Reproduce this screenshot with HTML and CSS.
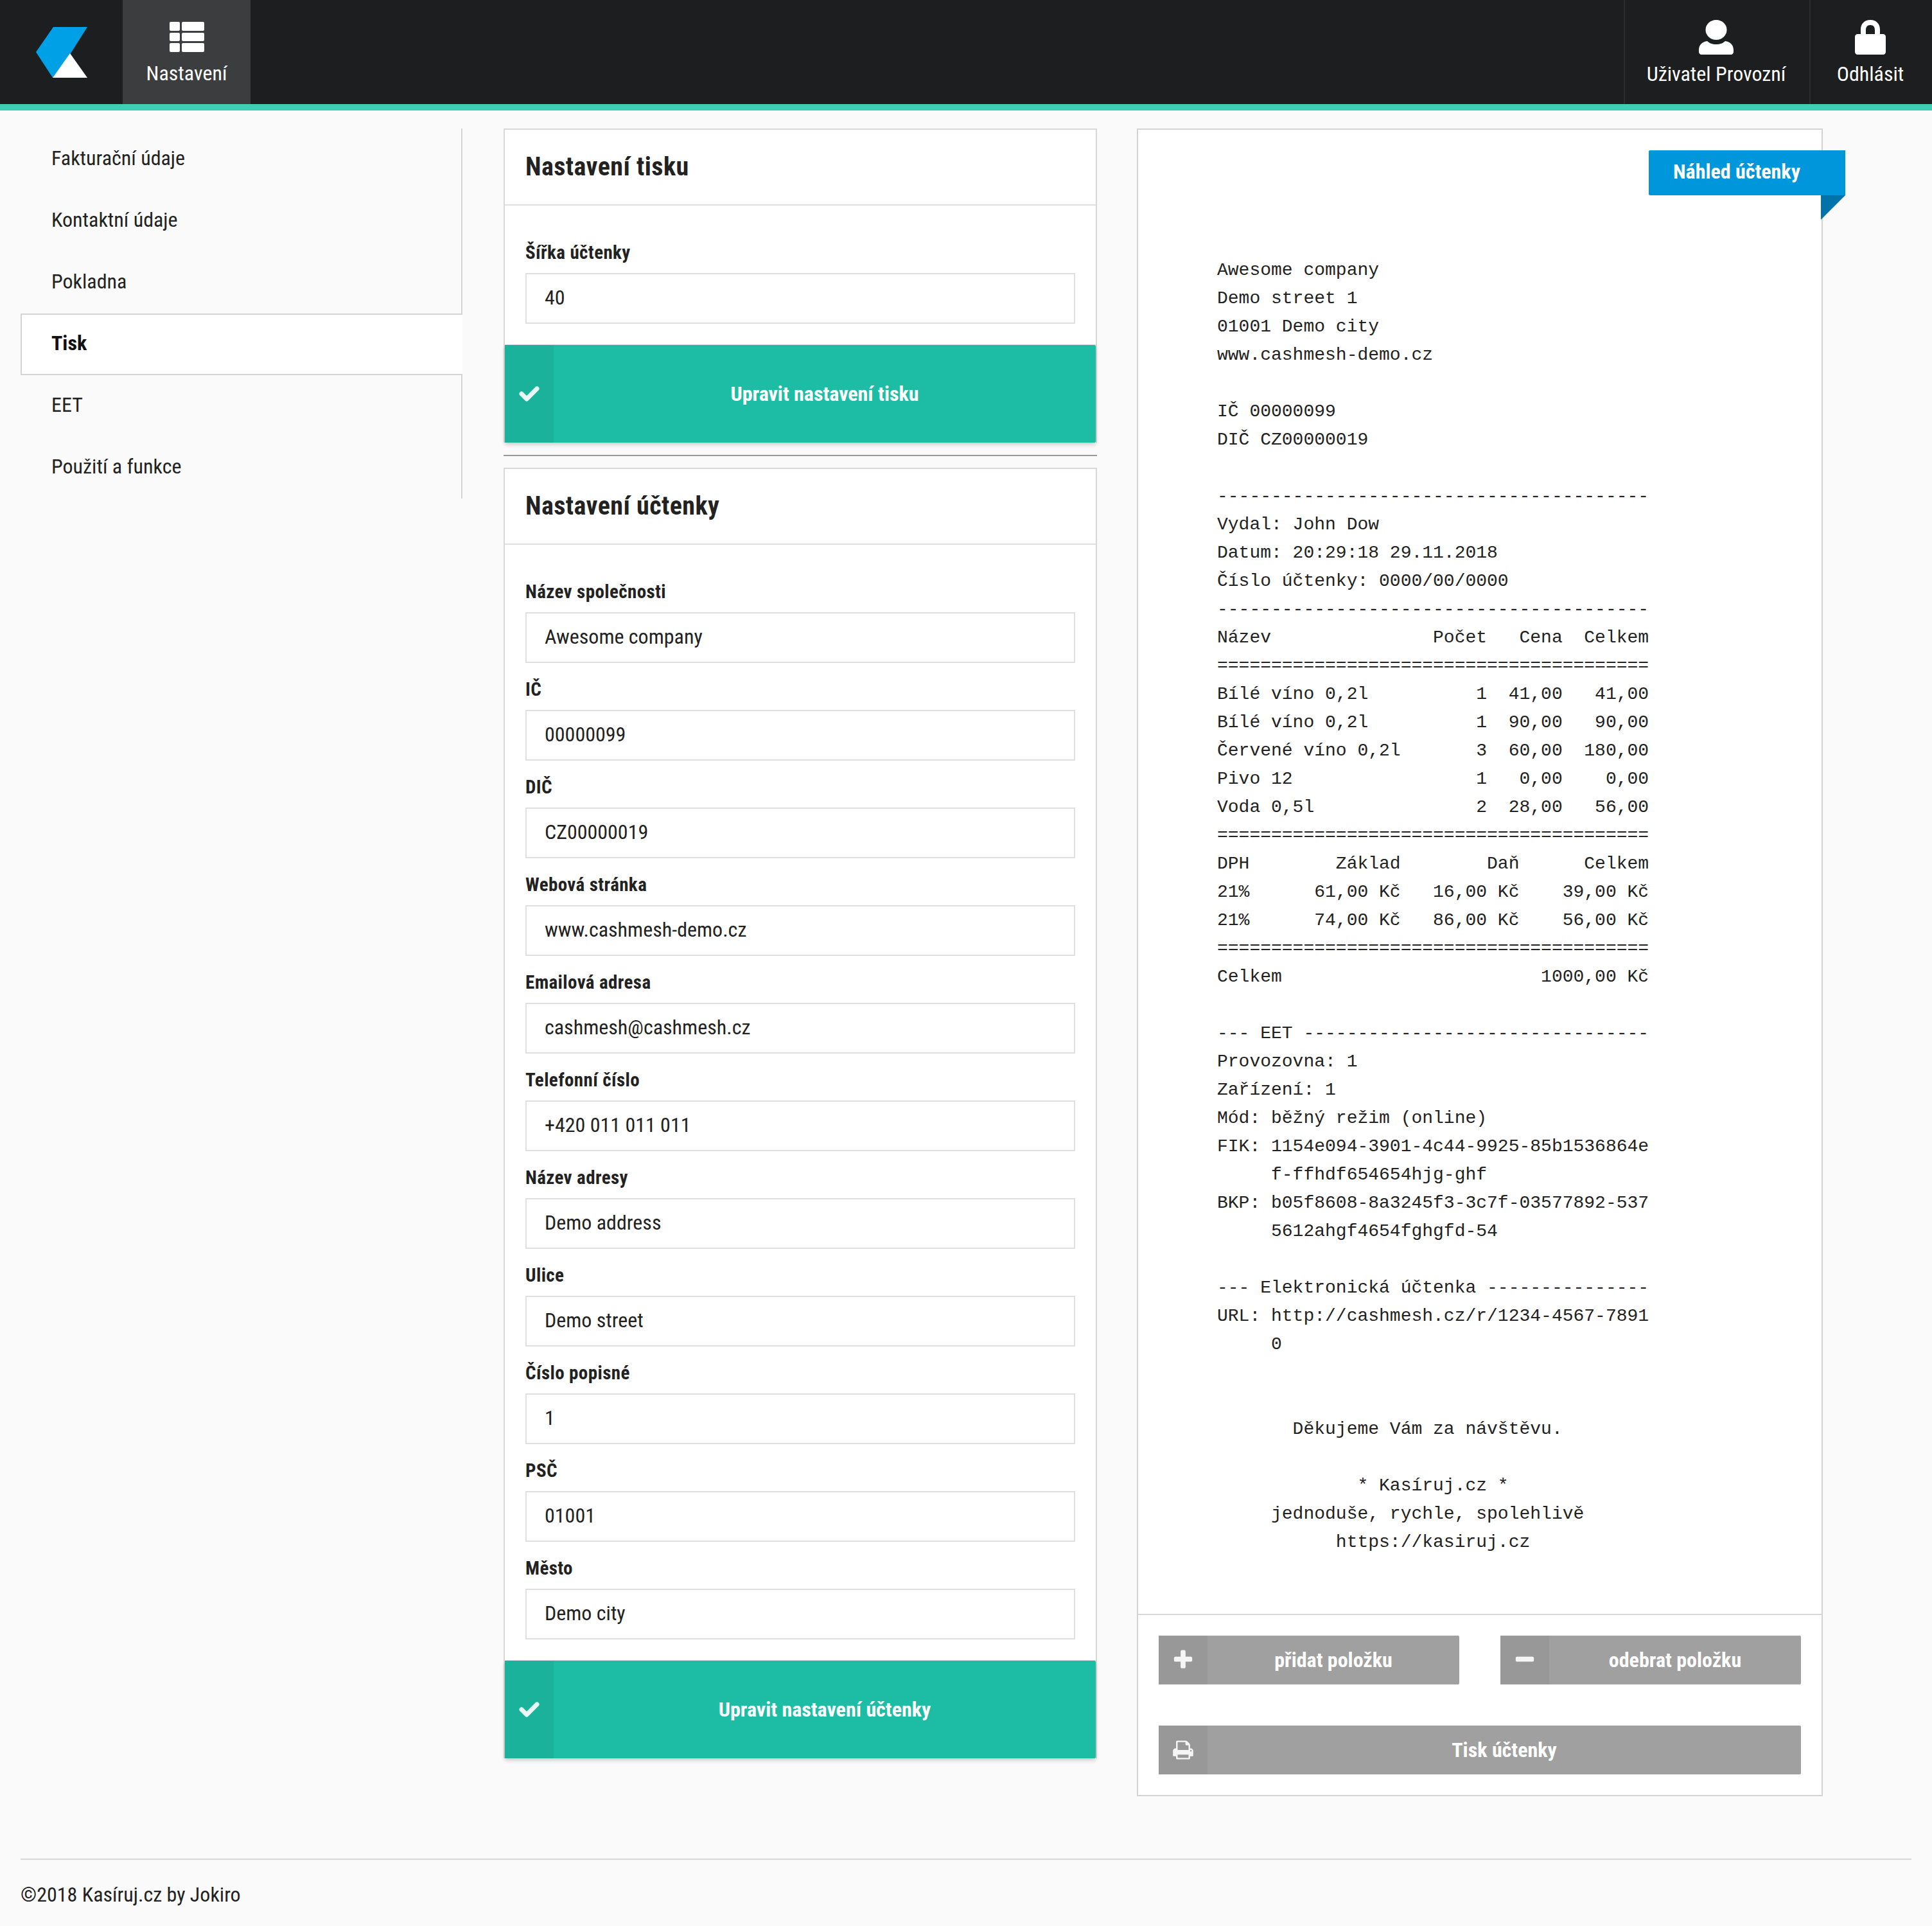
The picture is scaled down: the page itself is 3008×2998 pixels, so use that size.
FILE: index.html
```html
<!DOCTYPE html>
<html lang="cs">
<head>
<meta charset="utf-8">
<title>Kasíruj.cz – Nastavení tisku</title>
<link rel="stylesheet" href="styles.css">
</head>
<body>
<header class="topbar">
  <a class="logo" href="#">
    <svg viewBox="0 0 80 79" width="80" height="79"><polygon points="27,0 80,0 54,41 26,79 0,39" fill="#00a0e6"/><polygon points="53,41 80,79 26,79" fill="#fff"/></svg>
  </a>
  <a class="nav-item nav-active" href="#">
    <svg class="nav-icon" viewBox="0 0 54 47" width="54" height="47" fill="#fff"><rect x="0" y="0" width="16" height="14" rx="2"/><rect x="19" y="0" width="35" height="14" rx="2"/><rect x="0" y="17" width="16" height="13" rx="2"/><rect x="19" y="17" width="35" height="13" rx="2"/><rect x="0" y="33" width="16" height="14" rx="2"/><rect x="19" y="33" width="35" height="14" rx="2"/></svg>
    <span>Nastavení</span>
  </a>
  <div class="spacer"></div>
  <a class="nav-item nav-right user" href="#">
    <svg class="nav-icon" viewBox="0 0 54 54" width="54" height="54" fill="#fff"><ellipse cx="27" cy="15.500" rx="16.500" ry="15.500"/><path d="M0 47c0-8 5-13 13-14 3 3 8 5 14 5s11-2 14-5c8 1 13 6 13 14v3c0 2-2 4-4 4H4c-2 0-4-2-4-4z"/></svg>
    <span>Uživatel Provozní</span>
  </a>
  <a class="nav-item nav-right logout" href="#">
    <svg class="nav-icon" viewBox="0 0 48 54" width="48" height="54" fill="#fff"><path d="M24 0c-9 0-15 6-15 15v7H4c-2 0-4 2-4 4v24c0 2 2 4 4 4h40c2 0 4-2 4-4V26c0-2-2-4-4-4h-5v-7C39 6 33 0 24 0zm0 8c5 0 7 3 7 8v6H17v-6c0-5 2-8 7-8z"/></svg>
    <span>Odhlásit</span>
  </a>
</header>

<main class="content">
  <nav class="sidenav">
    <a href="#">Fakturační údaje</a>
    <a href="#">Kontaktní údaje</a>
    <a href="#">Pokladna</a>
    <a href="#" class="current">Tisk</a>
    <a href="#">EET</a>
    <a href="#">Použití a funkce</a>
  </nav>

  <div class="forms">
    <section class="card">
      <h2 class="card-title">Nastavení tisku</h2>
      <div class="card-body">
        <label class="field"><span>Šířka účtenky</span><input type="text" value="40"></label>
      </div>
      <button class="btn btn-teal"><span class="btn-icon"><svg viewBox="0 0 32 24" width="32" height="24" fill="none" stroke="#e8f8f5" stroke-width="7" stroke-linejoin="round" stroke-linecap="round"><polyline points="4,12 12,20 28,4"/></svg></span><span class="btn-text">Upravit nastavení tisku</span></button>
    </section>
    <hr class="rule">
    <section class="card">
      <h2 class="card-title">Nastavení účtenky</h2>
      <div class="card-body">
        <label class="field"><span>Název společnosti</span><input type="text" value="Awesome company"></label>
        <label class="field"><span>IČ</span><input type="text" value="00000099"></label>
        <label class="field"><span>DIČ</span><input type="text" value="CZ00000019"></label>
        <label class="field"><span>Webová stránka</span><input type="text" value="www.cashmesh-demo.cz"></label>
        <label class="field"><span>Emailová adresa</span><input type="text" value="cashmesh@cashmesh.cz"></label>
        <label class="field"><span>Telefonní číslo</span><input type="text" value="+420 011 011 011"></label>
        <label class="field"><span>Název adresy</span><input type="text" value="Demo address"></label>
        <label class="field"><span>Ulice</span><input type="text" value="Demo street"></label>
        <label class="field"><span>Číslo popisné</span><input type="text" value="1"></label>
        <label class="field"><span>PSČ</span><input type="text" value="01001"></label>
        <label class="field"><span>Město</span><input type="text" value="Demo city"></label>
      </div>
      <button class="btn btn-teal"><span class="btn-icon"><svg viewBox="0 0 32 24" width="32" height="24" fill="none" stroke="#e8f8f5" stroke-width="7" stroke-linejoin="round" stroke-linecap="round"><polyline points="4,12 12,20 28,4"/></svg></span><span class="btn-text">Upravit nastavení účtenky</span></button>
    </section>
  </div>

  <section class="preview">
    <div class="ribbon">Náhled účtenky</div>
    <pre class="receipt">Awesome company
Demo street 1
01001 Demo city
www.cashmesh-demo.cz

IČ 00000099
DIČ CZ00000019

----------------------------------------
Vydal: John Dow
Datum: 20:29:18 29.11.2018
Číslo účtenky: 0000/00/0000
----------------------------------------
Název               Počet   Cena  Celkem
========================================
Bílé víno 0,2l          1  41,00   41,00
Bílé víno 0,2l          1  90,00   90,00
Červené víno 0,2l       3  60,00  180,00
Pivo 12                 1   0,00    0,00
Voda 0,5l               2  28,00   56,00
========================================
DPH        Základ        Daň      Celkem
21%      61,00 Kč   16,00 Kč    39,00 Kč
21%      74,00 Kč   86,00 Kč    56,00 Kč
========================================
Celkem                        1000,00 Kč

--- EET --------------------------------
Provozovna: 1
Zařízení: 1
Mód: běžný režim (online)
FIK: 1154e094-3901-4c44-9925-85b1536864e
     f-ffhdf654654hjg-ghf
BKP: b05f8608-8a3245f3-3c7f-03577892-537
     5612ahgf4654fghgfd-54

--- Elektronická účtenka ---------------
URL: http://cashmesh.cz/r/1234-4567-7891
     0


       Děkujeme Vám za návštěvu.

             * Kasíruj.cz *
     jednoduše, rychle, spolehlivě
           https://kasiruj.cz</pre>
    <div class="actions">
      <div class="actions-row">
        <button class="btn btn-grey"><span class="btn-icon"><svg viewBox="0 0 1792 1792" width="36" height="36" fill="#f5f5f5"><path d="M1600 736v192q0 40-28 68t-68 28h-416v416q0 40-28 68t-68 28h-192q-40 0-68-28t-28-68v-416h-416q-40 0-68-28t-28-68v-192q0-40 28-68t68-28h416v-416q0-40 28-68t68-28h192q40 0 68 28t28 68v416h416q40 0 68 28t28 68z"/></svg></span><span class="btn-text">přidat položku</span></button>
        <button class="btn btn-grey"><span class="btn-icon"><svg viewBox="0 0 1792 1792" width="36" height="36" fill="#f5f5f5"><path d="M1600 736v192q0 40-28 68t-68 28h-1216q-40 0-68-28t-28-68v-192q0-40 28-68t68-28h1216q40 0 68 28t28 68z"/></svg></span><span class="btn-text">odebrat položku</span></button>
      </div>
      <button class="btn btn-grey"><span class="btn-icon"><svg viewBox="0 0 1792 1792" width="34" height="34" fill="#f5f5f5"><path d="M448 1536h896v-256h-896v256zm0-640h896v-384h-160q-40 0-68-28t-28-68v-160h-640v640zm1152 64q0-26-19-45t-45-19-45 19-19 45 19 45 45 19 45-19 19-45zm128 0v416q0 13-9.500 22.500t-22.500 9.500h-224v160q0 40-28 68t-68 28h-960q-40 0-68-28t-28-68v-160h-224q-13 0-22.500-9.500t-9.500-22.500v-416q0-79 56.500-135.500t135.500-56.500h64v-544q0-40 28-68t68-28h672q40 0 88 20t76 48l152 152q28 28 48 76t20 88v256h64q79 0 135.500 56.500t56.500 135.500z"/></svg></span><span class="btn-text">Tisk účtenky</span></button>
    </div>
  </section>
</main>

<footer class="footer">©2018 Kasíruj.cz by Jokiro</footer>
</body>
</html>
```
FILE: styles.css
```css
* { box-sizing: border-box; }
html, body { margin: 0; padding: 0; }
body {
  background: #fafafa;
  color: #222;
  font-family: Roboto, "Liberation Sans", sans-serif;
  font-size: 32px;
  font-stretch: 87%;
}
a { color: inherit; text-decoration: none; }

.topbar {
  display: flex;
  height: 172px;
  background: #1c1e20;
  border-bottom: 10px solid #41ceb4;
  color: #fff;
}
.logo { display: flex; align-items: center; padding: 0 55px 0 56px; width: 191px; }
.spacer { flex: 1; }
.nav-item {
  display: flex;
  flex-direction: column;
  align-items: center;
  padding-top: 31px;
  line-height: 40px;
  font-size: 32px;
}
.nav-item span { margin-top: 10px; }
.nav-active { width: 199px; background: #3c3d3f; padding-top: 34px; }
.nav-active span { margin-top: 13px; }
.nav-right { border-left: 2px solid #2a2c2e; padding-right: 3px; }
.user { width: 289px; }
.logout { width: 191px; }
.nav-icon { flex: none; }

.content {
  display: flex;
  align-items: flex-start;
  padding: 28px 0 0 32px;
}
.sidenav { width: 688px; margin-right: 64px; display: flex; flex-direction: column; }
.sidenav a {
  display: block;
  height: 96px;
  line-height: 93px;
  padding-left: 48px;
  border-right: 2px solid #d4d4d4;
}
.sidenav a.current {
  background: #fff;
  border: 2px solid #d4d4d4;
  border-right: 0;
  line-height: 89px;
  padding-left: 46px;
  font-weight: 700;
  color: #111;
}

.forms { width: 924px; margin-right: 62px; }
.card {
  background: #fff;
  border: 2px solid #d8d8d8;
  border-bottom: 0;
  display: flex;
  flex-direction: column;
}
.card-title {
  margin: 0;
  height: 118px;
  padding: 0 32px;
  line-height: 116px;
  font-size: 40px;
  letter-spacing: .45px;
  font-weight: 700;
  border-bottom: 2px solid #e0e0e0;
}
.card-body {
  display: flex;
  flex-direction: column;
  gap: 24px;
  padding: 56px 32px 32px;
  border-bottom: 1px solid #e0e0e0;
}
.field { display: block; }
.field span {
  display: block;
  height: 35px;
  margin-bottom: 14px;
  line-height: 35px;
  font-size: 29px;
  letter-spacing: .4px;
  font-weight: 700;
}
.field input {
  display: block;
  width: 100%;
  height: 79px;
  margin: 0;
  padding: 0 28px 4px;
  border: 2px solid #e0e0e0;
  background: #fff;
  color: #222;
  font: inherit;
  font-size: 32px;
  font-stretch: 87%;
  outline: 0;
}

.btn {
  display: flex;
  align-items: stretch;
  width: 100%;
  padding: 0;
  border: 0;
  border-radius: 2px;
  color: #fff;
  font-family: inherit;
  font-stretch: 87%;
  font-weight: 700;
  font-size: 32px;
}
.btn-icon { flex: none; width: 76px; display: flex; align-items: center; justify-content: center; }
.btn-text { flex: 1; display: flex; align-items: center; justify-content: center; }
.btn-teal { height: 152px; background: #1dbca5; box-shadow: 0 3px 6px rgba(0,0,0,.2); }
.btn-teal .btn-icon { background: #1bb29c; }
.btn-grey { height: 76px; background: #a0a0a0; }
.btn-grey .btn-icon { background: #989898; }
.rule { height: 2px; margin: 19px 0 18px; border: 0; background: #999; }

.preview {
  position: relative;
  width: 1068px;
  background: #fff;
  border: 2px solid #d4d4d4;
}
.ribbon {
  position: absolute;
  top: 32px;
  right: -37px;
  width: 306px;
  height: 70px;
  padding-left: 38px;
  line-height: 66px;
  background: #0096dc;
  color: #fff;
  font-weight: 700;
  font-size: 32px;
  border-radius: 2px 0 0 2px;
}
.ribbon::after {
  content: "";
  position: absolute;
  right: 0;
  top: 70px;
  width: 38px;
  height: 38px;
  background: #0074aa;
  clip-path: polygon(0 0, 100% 0, 0 100%);
}
.receipt {
  margin: 0;
  padding: 197px 0 89px 123px;
  font-family: "Liberation Mono", monospace;
  font-size: 28px;
  font-stretch: normal;
  line-height: 44px;
  color: #222;
  border-bottom: 2px solid #d8d8d8;
}
.actions { padding: 32px; display: flex; flex-direction: column; gap: 64px; }
.actions-row { display: flex; gap: 64px; }

.footer {
  margin: 97px 32px 0;
  padding: 32px 0 0;
  height: 105px;
  border-top: 2px solid #d8d8d8;
  line-height: 44px;
}
```
